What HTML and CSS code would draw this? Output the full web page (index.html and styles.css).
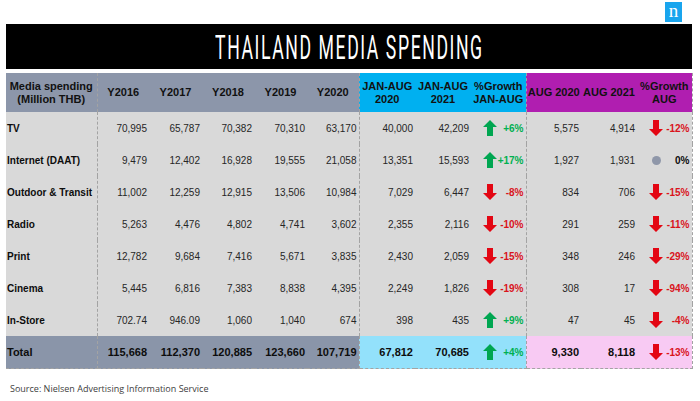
FILE: index.html
```html
<!DOCTYPE html>
<html>
<head>
<meta charset="utf-8">
<link rel="stylesheet" href="styles.css">
</head>
<body>
<div class="page">
  <div class="topbar">
    <div class="logo"><span>n</span></div>
  </div>
  <div class="titlebar"><span class="title">THAILAND MEDIA SPENDING</span></div>
  <table class="grid">
    <colgroup>
      <col class="c-label"><col class="c-y"><col class="c-y2"><col class="c-y"><col class="c-y2"><col class="c-y">
      <col class="c-ja"><col class="c-ja"><col class="c-jg">
      <col class="c-a"><col class="c-a2"><col class="c-a">
    </colgroup>
    <thead>
      <tr>
        <th class="h-grey sep">Media spending<br>(Million THB)</th>
        <th class="h-grey">Y2016</th>
        <th class="h-grey">Y2017</th>
        <th class="h-grey">Y2018</th>
        <th class="h-grey">Y2019</th>
        <th class="h-grey sep">Y2020</th>
        <th class="h-cyan">JAN-AUG<br>2020</th>
        <th class="h-cyan">JAN-AUG<br>2021</th>
        <th class="h-cyan sep">%Growth<br>JAN-AUG</th>
        <th class="h-mag">AUG 2020</th>
        <th class="h-mag">AUG 2021</th>
        <th class="h-mag sep">%Growth<br>AUG</th>
      </tr>
    </thead>
    <tbody>
      <tr>
        <td class="lbl sep">TV</td>
        <td>70,995</td><td>65,787</td><td>70,382</td><td>70,310</td><td class="sep">63,170</td>
        <td>40,000</td><td>42,209</td>
        <td class="sep"><div class="gr"><svg class="arr up" viewBox="0 0 14 16"><polygon points="7,0 14,7 10,7 10,16 4,16 4,7 0,7"/></svg><span class="pos">+6%</span></div></td>
        <td>5,575</td><td>4,914</td>
        <td class="sep"><div class="gr"><svg class="arr down" viewBox="0 0 14 16"><polygon points="4,0 10,0 10,9 14,9 7,16 0,9 4,9"/></svg><span class="neg">-12%</span></div></td>
      </tr>
      <tr>
        <td class="lbl sep">Internet (DAAT)</td>
        <td>9,479</td><td>12,402</td><td>16,928</td><td>19,555</td><td class="sep">21,058</td>
        <td>13,351</td><td>15,593</td>
        <td class="sep"><div class="gr"><svg class="arr up" viewBox="0 0 14 16"><polygon points="7,0 14,7 10,7 10,16 4,16 4,7 0,7"/></svg><span class="pos">+17%</span></div></td>
        <td>1,927</td><td>1,931</td>
        <td class="sep"><div class="gr"><span class="dot"></span><span class="zero">0%</span></div></td>
      </tr>
      <tr>
        <td class="lbl sep">Outdoor &amp; Transit</td>
        <td>11,002</td><td>12,259</td><td>12,915</td><td>13,506</td><td class="sep">10,984</td>
        <td>7,029</td><td>6,447</td>
        <td class="sep"><div class="gr"><svg class="arr down" viewBox="0 0 14 16"><polygon points="4,0 10,0 10,9 14,9 7,16 0,9 4,9"/></svg><span class="neg">-8%</span></div></td>
        <td>834</td><td>706</td>
        <td class="sep"><div class="gr"><svg class="arr down" viewBox="0 0 14 16"><polygon points="4,0 10,0 10,9 14,9 7,16 0,9 4,9"/></svg><span class="neg">-15%</span></div></td>
      </tr>
      <tr>
        <td class="lbl sep">Radio</td>
        <td>5,263</td><td>4,476</td><td>4,802</td><td>4,741</td><td class="sep">3,602</td>
        <td>2,355</td><td>2,116</td>
        <td class="sep"><div class="gr"><svg class="arr down" viewBox="0 0 14 16"><polygon points="4,0 10,0 10,9 14,9 7,16 0,9 4,9"/></svg><span class="neg">-10%</span></div></td>
        <td>291</td><td>259</td>
        <td class="sep"><div class="gr"><svg class="arr down" viewBox="0 0 14 16"><polygon points="4,0 10,0 10,9 14,9 7,16 0,9 4,9"/></svg><span class="neg">-11%</span></div></td>
      </tr>
      <tr>
        <td class="lbl sep">Print</td>
        <td>12,782</td><td>9,684</td><td>7,416</td><td>5,671</td><td class="sep">3,835</td>
        <td>2,430</td><td>2,059</td>
        <td class="sep"><div class="gr"><svg class="arr down" viewBox="0 0 14 16"><polygon points="4,0 10,0 10,9 14,9 7,16 0,9 4,9"/></svg><span class="neg">-15%</span></div></td>
        <td>348</td><td>246</td>
        <td class="sep"><div class="gr"><svg class="arr down" viewBox="0 0 14 16"><polygon points="4,0 10,0 10,9 14,9 7,16 0,9 4,9"/></svg><span class="neg">-29%</span></div></td>
      </tr>
      <tr>
        <td class="lbl sep">Cinema</td>
        <td>5,445</td><td>6,816</td><td>7,383</td><td>8,838</td><td class="sep">4,395</td>
        <td>2,249</td><td>1,826</td>
        <td class="sep"><div class="gr"><svg class="arr down" viewBox="0 0 14 16"><polygon points="4,0 10,0 10,9 14,9 7,16 0,9 4,9"/></svg><span class="neg">-19%</span></div></td>
        <td>308</td><td>17</td>
        <td class="sep"><div class="gr"><svg class="arr down" viewBox="0 0 14 16"><polygon points="4,0 10,0 10,9 14,9 7,16 0,9 4,9"/></svg><span class="neg">-94%</span></div></td>
      </tr>
      <tr>
        <td class="lbl sep">In-Store</td>
        <td>702.74</td><td>946.09</td><td>1,060</td><td>1,040</td><td class="sep">674</td>
        <td>398</td><td>435</td>
        <td class="sep"><div class="gr"><svg class="arr up" viewBox="0 0 14 16"><polygon points="7,0 14,7 10,7 10,16 4,16 4,7 0,7"/></svg><span class="pos">+9%</span></div></td>
        <td>47</td><td>45</td>
        <td class="sep"><div class="gr"><svg class="arr down" viewBox="0 0 14 16"><polygon points="4,0 10,0 10,9 14,9 7,16 0,9 4,9"/></svg><span class="neg">-4%</span></div></td>
      </tr>
      <tr class="total">
        <td class="lbl t-grey sep">Total</td>
        <td class="t-grey">115,668</td><td class="t-grey">112,370</td><td class="t-grey">120,885</td><td class="t-grey">123,660</td><td class="t-grey sep">107,719</td>
        <td class="t-cyan">67,812</td><td class="t-cyan">70,685</td>
        <td class="t-cyan sep"><div class="gr"><svg class="arr up" viewBox="0 0 14 16"><polygon points="7,0 14,7 10,7 10,16 4,16 4,7 0,7"/></svg><span class="pos">+4%</span></div></td>
        <td class="t-pink">9,330</td><td class="t-pink">8,118</td>
        <td class="t-pink sep"><div class="gr"><svg class="arr down" viewBox="0 0 14 16"><polygon points="4,0 10,0 10,9 14,9 7,16 0,9 4,9"/></svg><span class="neg">-13%</span></div></td>
      </tr>
    </tbody>
  </table>
  <p class="source">Source: Nielsen Advertising Information Service</p>
</div>
</body>
</html>
```
FILE: styles.css
```css
html, body {
  margin: 0;
  padding: 0;
  background: #ffffff;
}

.page {
  width: 700px;
  height: 401px;
  padding-left: 6px;
  box-sizing: border-box;
  font-family: "Liberation Sans", Arial, sans-serif;
  overflow: hidden;
}

.topbar {
  width: 686px;
  height: 24px;
  display: flex;
  justify-content: flex-end;
  align-items: flex-start;
}

.logo {
  width: 17px;
  height: 20px;
  margin-top: 2px;
  margin-right: 10px;
  background: #19a5ee;
  display: flex;
  align-items: center;
  justify-content: center;
}

.logo span {
  color: #ffffff;
  font-family: "Liberation Serif", "Times New Roman", serif;
  font-size: 19px;
  line-height: 1;
  margin-top: -3px;
}

.titlebar {
  width: 686px;
  height: 45px;
  background: #000000;
  margin-bottom: 4px;
  display: flex;
  align-items: center;
  justify-content: center;
  overflow: hidden;
}

.title {
  display: inline-block;
  color: #ffffff;
  font-family: Roboto, "Liberation Sans", sans-serif;
  font-weight: 400;
  font-size: 34px;
  line-height: 1;
  letter-spacing: 3px;
  white-space: nowrap;
  transform: scaleX(0.52);
  margin-top: 1px;
}

.grid {
  width: 686px;
  table-layout: fixed;
  border-collapse: collapse;
  border-spacing: 0;
}

.c-label { width: 91px; }
.c-y { width: 52px; }
.c-y2 { width: 53px; }
.c-ja { width: 56px; }
.c-jg { width: 55px; }
.c-a { width: 55px; }
.c-a2 { width: 56px; }

.grid th {
  height: 39px;
  padding: 0;
  font-size: 11px;
  font-weight: bold;
  line-height: 13px;
  color: #111111;
  text-align: center;
  vertical-align: middle;
  white-space: nowrap;
}

.h-grey { background: #8c96aa; }
.h-cyan { background: #00b0f0; }
.h-mag { background: #b01eb0; }

.grid td {
  height: 32px;
  padding: 0 2px 0 0;
  background: #d9d9d9;
  font-size: 10px;
  color: #262626;
  text-align: right;
  vertical-align: middle;
  white-space: nowrap;
}

.grid td.lbl {
  text-align: left;
  padding-left: 1px;
  font-weight: bold;
  color: #0d0d0d;
}

.sep {
  border-right: 1px dashed #a3a3a3;
}

.gr {
  display: flex;
  align-items: center;
  justify-content: space-between;
  padding-left: 12px;
}

.arr {
  width: 14px;
  height: 16px;
  display: block;
}

.arr.up polygon { fill: #00a651; }
.arr.down polygon { fill: #e30613; }

.pos {
  color: #00b050;
  font-weight: bold;
  font-size: 10px;
}

.neg {
  color: #d9141c;
  font-weight: bold;
  font-size: 10px;
}

.zero {
  color: #0d0d0d;
  font-weight: bold;
  font-size: 10px;
}

.dot {
  display: block;
  width: 9px;
  height: 9px;
  margin-left: 3px;
  border-radius: 50%;
  background: #8f97a9;
}

.total td {
  font-size: 11px;
  font-weight: bold;
  color: #0d0d0d;
  border-bottom: 1px dashed #a3a3a3;
}

.grid .total td.t-grey { background: #8a95a9; }
.grid .total td.t-cyan { background: #93e1fb; }
.grid .total td.t-pink { background: #f8caf3; }

.total .pos, .total .neg { font-size: 10px; }

.source {
  margin: 13px 0 0 4px;
  font-family: "Open Sans", "Liberation Sans", sans-serif;
  font-size: 9px;
  color: #404040;
}
```
